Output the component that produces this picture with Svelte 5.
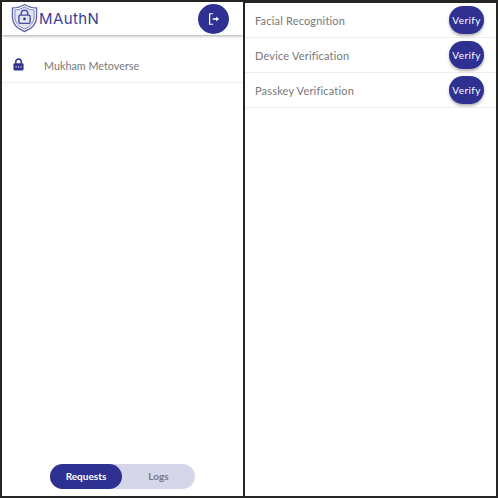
<script>
  const methods = ['Facial Recognition', 'Device Verification', 'Passkey Verification'];
</script>

<div class="page">
  <section class="panel left">
    <header class="top">
      <div class="brand">
        <svg class="shield" viewBox="0 0 28 30" width="27" height="30" fill="none" stroke="#2e3192" aria-hidden="true">
          <path d="M14 1 C10 3.5 6 4.6 1.5 4.6 V14 C1.5 21.5 7 26.5 14 29 C21 26.5 26.5 21.5 26.5 14 V4.6 C22 4.6 18 3.5 14 1Z" stroke-width="1.4" stroke-opacity=".75"/>
          <path d="M14 3.6 C10.8 5.6 7.4 6.6 4 6.7 V14 C4 20 8.5 24.2 14 26.3 C19.5 24.2 24 20 24 14 V6.7 C20.6 6.6 17.2 5.6 14 3.6Z" stroke-width="1" stroke-opacity=".6" fill="#e4e5f2"/>
          <path d="M10.6 12 V10.4 C10.6 8.4 12 7 14 7 C16 7 17.4 8.4 17.4 10.4 V12" stroke-width="1.5" stroke-opacity=".8"/>
          <rect x="8.2" y="12" width="11.6" height="8.6" rx="1.2" stroke-width="1.4" stroke-opacity=".85"/>
          <circle cx="14" cy="16" r="1.4" fill="#2e3192" stroke="none"/>
        </svg>
        <span class="name">MAuthN</span>
      </div>
      <button class="logout" aria-label="Log out">
        <svg viewBox="0 0 16 16" width="14" height="14" fill="none" stroke="#fff" stroke-width="1.4">
          <path d="M7 2H3v12h4"/>
          <path d="M6.5 8h6.5" stroke-width="1.8"/>
          <path d="M10.4 5.2 13.6 8l-3.2 2.8z" fill="#fff" stroke="none"/>
        </svg>
      </button>
    </header>

    <div class="request">
      <svg class="lock" viewBox="0 0 12 14" width="11" height="13" aria-hidden="true">
        <path d="M3 6V4a3 3 0 0 1 6 0v2" fill="none" stroke="#2e3192" stroke-width="1.7"/>
        <rect x="0.5" y="5.5" width="11" height="8" rx="1.2" fill="#2e3192"/>
        <circle cx="3.4" cy="9.6" r=".7" fill="#fff"/>
        <circle cx="6" cy="9.6" r=".7" fill="#fff"/>
        <circle cx="8.6" cy="9.6" r=".7" fill="#fff"/>
      </svg>
      <span>Mukham Metoverse</span>
    </div>

    <div class="tabs">
      <button class="tab active">Requests</button>
      <button class="tab">Logs</button>
    </div>
  </section>

  <section class="panel right">
    {#each methods as m}
      <div class="method">
        <span>{m}</span>
        <button class="verify">Verify</button>
      </div>
    {/each}
  </section>
</div>

<style>
  :global(body) { margin: 0; background: #262626; }
  .page {
    width: 498px;
    height: 498px;
    box-sizing: border-box;
    padding: 2px;
    display: grid;
    grid-template-columns: 241px 251px;
    gap: 2px;
    font-family: Lato, "Open Sans", sans-serif;
  }
  .panel {
    background: #fff;
    display: flex;
    flex-direction: column;
    min-height: 0;
    position: relative;
  }
  .right { margin-top: 1px; }
  .top {
    height: 33px;
    flex: none;
    display: flex;
    align-items: center;
    justify-content: space-between;
    padding: 0 14px 0 9px;
    box-shadow: 0 1px 3px rgba(0, 0, 0, .35);
  }
  .brand { display: flex; align-items: center; gap: 1px; }
  .shield { display: block; margin-top: -1px; }
  .name {
    color: #3b3e97;
    font-family: Inter, sans-serif;
    font-size: 15px;
    letter-spacing: .4px;
    font-weight: 400;
  }
  .logout {
    width: 31px;
    height: 30px;
    border: 0;
    padding: 0;
    border-radius: 50%;
    background: #2e3192;
    display: flex;
    align-items: center;
    justify-content: center;
    margin-top: 1px;
  }
  .request {
    margin-top: 14px;
    height: 33px;
    display: flex;
    align-items: center;
    padding: 0 0 0 11px;
    gap: 20px;
    border-bottom: 1px solid #eee;
    color: #777;
    font-size: 10.8px;
    font-weight: 400;
  }
  .lock { display: block; margin-top: -3px; }
  .request span { margin-top: -1px; }
  .tabs {
    margin-top: auto;
    margin-bottom: 7px;
    align-self: center;
    width: 145px;
    height: 25px;
    border-radius: 13px;
    background: #d5d6e9;
    display: flex;
  }
  .tab {
    flex: 1;
    border: 0;
    border-radius: 13px;
    background: transparent;
    padding: 0 0 2px;
    font: 700 10px Lato, sans-serif;
    color: #77778c;
  }
  .tab.active { flex: none; width: 72px; background: #2e3192; color: #fff; }
  .method {
    height: 34px;
    flex: none;
    display: flex;
    align-items: center;
    justify-content: space-between;
    padding: 0 12px 0 10px;
    border-bottom: 1px solid #eee;
    color: #777;
    font-size: 11px;
    letter-spacing: .18px;
  }
  .verify {
    width: 35px;
    height: 28px;
    border: 0;
    padding: 0 0 1px;
    border-radius: 14px;
    background: #2e3192;
    color: #fff;
    font: 400 10px Lato, sans-serif;
    letter-spacing: .4px;
    box-shadow: 0 2px 3px rgba(0, 0, 0, .3);
  }
</style>
